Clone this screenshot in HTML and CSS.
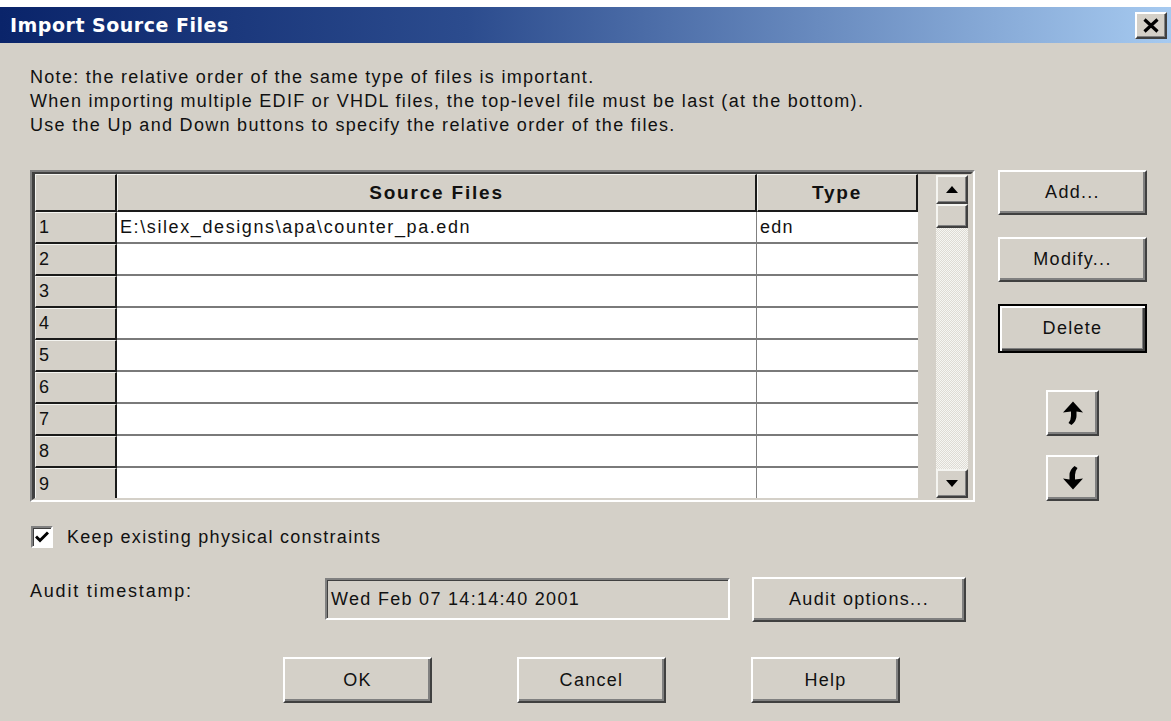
FILE: index.html
```html
<!DOCTYPE html>
<html lang="en">
<head>
<meta charset="utf-8">
<title>Import Source Files</title>
<link rel="stylesheet" href="styles.css">
</head>
<body>
<div class="screen-top"></div>
<div class="dialog">
  <div class="titlebar">
    <span class="title">Import Source Files</span>
    <button class="close" type="button" aria-label="Close">
      <svg width="18" height="15" viewBox="0 0 18 15"><path d="M2.5 1.5 L15.5 13.5 M15.5 1.5 L2.5 13.5" stroke="#000" stroke-width="3.2" fill="none"/></svg>
    </button>
  </div>

  <div class="content">
    <p class="note">Note: the relative order of the same type of files is important.<br>When importing multiple EDIF or VHDL files, the top-level file must be last (at the bottom).<br>Use the Up and Down buttons to specify the relative order of the files.</p>

    <div class="main">
      <div class="grid">
        <div class="grid-inner">
          <div class="table">
            <div class="row head">
              <div class="cell num"></div>
              <div class="cell src">Source Files</div>
              <div class="cell type">Type</div>
            </div>
            <div class="row"><div class="cell num">1</div><div class="cell src path">E:\silex_designs\apa\counter_pa.edn</div><div class="cell type">edn</div></div>
            <div class="row"><div class="cell num">2</div><div class="cell src"></div><div class="cell type"></div></div>
            <div class="row"><div class="cell num">3</div><div class="cell src"></div><div class="cell type"></div></div>
            <div class="row"><div class="cell num">4</div><div class="cell src"></div><div class="cell type"></div></div>
            <div class="row"><div class="cell num">5</div><div class="cell src"></div><div class="cell type"></div></div>
            <div class="row"><div class="cell num">6</div><div class="cell src"></div><div class="cell type"></div></div>
            <div class="row"><div class="cell num">7</div><div class="cell src"></div><div class="cell type"></div></div>
            <div class="row"><div class="cell num">8</div><div class="cell src"></div><div class="cell type"></div></div>
            <div class="row last"><div class="cell num">9</div><div class="cell src"></div><div class="cell type"></div></div>
          </div>
          <div class="scrollbar">
            <div class="sb-btn">
              <svg width="12" height="7" viewBox="0 0 12 7"><path d="M6 0 L12 7 L0 7 Z" fill="#000"/></svg>
            </div>
            <div class="sb-thumb"></div>
            <div class="sb-track"></div>
            <div class="sb-btn">
              <svg width="12" height="7" viewBox="0 0 12 7"><path d="M0 0 L12 0 L6 7 Z" fill="#000"/></svg>
            </div>
          </div>
        </div>
      </div>

      <div class="side">
        <button class="btn side-btn" type="button">Add...</button>
        <button class="btn side-btn" type="button">Modify...</button>
        <button class="btn side-btn default" type="button">Delete</button>
        <button class="btn arrow-btn up" type="button" aria-label="Move up">
          <svg width="20" height="24" viewBox="0 0 20 24"><path d="M10 0.5 L20 11.5 L13.5 10.5 L13.5 15 Q13.5 20 8.5 24 L5.5 22 Q8 19 8 15 L8 10.5 L0 11.5 Z" fill="#000"/></svg>
        </button>
        <button class="btn arrow-btn down" type="button" aria-label="Move down">
          <svg width="20" height="24" viewBox="0 0 20 24"><path d="M10 23.5 L0 12.5 L6.5 13.5 L6.5 9 Q6.5 4 11.5 0 L14.5 2 Q12 5 12 9 L12 13.5 L20 12.5 Z" fill="#000"/></svg>
        </button>
      </div>
    </div>

    <label class="check">
      <span class="box">
        <svg width="14" height="12" viewBox="0 0 14 12"><path d="M1 5.5 L5 9.5 L13 1.5" stroke="#000" stroke-width="3" fill="none"/></svg>
      </span>
      <span class="check-label">Keep existing physical constraints</span>
    </label>

    <div class="audit">
      <span class="audit-label">Audit timestamp:</span>
      <div class="field">Wed Feb 07 14:14:40 2001</div>
      <button class="btn audit-btn" type="button">Audit options...</button>
    </div>

    <div class="actions">
      <button class="btn action-btn" type="button">OK</button>
      <button class="btn action-btn" type="button">Cancel</button>
      <button class="btn action-btn" type="button">Help</button>
    </div>
  </div>
</div>
</body>
</html>
```

FILE: styles.css
```css
* { box-sizing: border-box; }

html, body {
  margin: 0;
  padding: 0;
  background: #ffffff;
  overflow: hidden;
}

body {
  font-family: "Liberation Sans", Arial, sans-serif;
  font-size: 18px;
  letter-spacing: 1.3px;
  color: #111;
}

.screen-top {
  height: 7px;
  background: #ffffff;
}

.dialog {
  width: 1171px;
  height: 714px;
  background: #d4d0c8;
  display: flex;
  flex-direction: column;
}

/* Caption bar */
.titlebar {
  height: 36px;
  display: flex;
  align-items: center;
  justify-content: space-between;
  padding: 0 4px 0 10px;
  background: linear-gradient(to right, #0a246a 0%, #2c4c8e 40%, #a6caf0 100%);
}

.title {
  color: #fff;
  font-family: "DejaVu Sans", "Liberation Sans", sans-serif;
  font-weight: bold;
  font-size: 19px;
  letter-spacing: 0.5px;
}

.close {
  width: 32px;
  height: 27px;
  padding: 0;
  display: flex;
  align-items: center;
  justify-content: center;
  background: #d4d0c8;
  border: 2px solid;
  border-color: #fff #404040 #404040 #fff;
  box-shadow: inset -1px -1px #808080;
}

/* Dialog contents */
.content {
  padding: 22px 0 0 30px;
  flex: 1;
}

.note {
  margin: 0;
  line-height: 24px;
}

.main {
  display: flex;
  margin-top: 33px;
}

/* Spreadsheet-style file list */
.grid {
  width: 945px;
  height: 332px;
  border-style: solid;
  border-width: 2px;
  border-color: #808080 #fff #fff #808080;
}

.grid-inner {
  height: 100%;
  display: flex;
  border-style: solid;
  border-width: 2px 2px 2px 3px;
  border-color: #404040 #d4d0c8 #d4d0c8 #404040;
  background: #d4d0c8;
  overflow: hidden;
}

.table {
  width: 883px;
  flex: none;
}

.row {
  display: flex;
  height: 32px;
}

.row.head {
  height: 38px;
}

.cell {
  height: 100%;
  white-space: nowrap;
  overflow: hidden;
  display: flex;
  align-items: center;
  padding-left: 3px;
}

.cell.path { letter-spacing: 1.6px; }

.cell.num {
  width: 82px;
  background: #d4d0c8;
  border-right: 2px solid #1a1a1a;
  border-bottom: 2px solid #1a1a1a;
  border-top: 1px solid #f4f4f0;
  border-left: 1px solid #f4f4f0;
}

.cell.src {
  width: 640px;
  background: #fff;
  border-right: 1px solid #808080;
  border-bottom: 2px solid #7a7a7a;
}

.cell.type {
  width: 161px;
  background: #fff;
  border-bottom: 2px solid #7a7a7a;
}

.row.last .cell { border-bottom: none; }

.head .cell {
  background: #d4d0c8;
  font-weight: bold;
  font-size: 19px;
  letter-spacing: 1.8px;
  justify-content: center;
  padding-left: 0;
  border-top: 1px solid #f4f4f0;
  border-left: 1px solid #f4f4f0;
  border-right: 2px solid #1a1a1a;
  border-bottom: 2px solid #1a1a1a;
}

/* Vertical scroll bar */
.scrollbar {
  width: 32px;
  margin-left: auto;
  margin-right: 3px;
  margin-top: 1px;
  display: flex;
  flex-direction: column;
}

.sb-btn,
.sb-thumb {
  flex: none;
  background: #d4d0c8;
  border: 2px solid;
  border-color: #f4f4f0 #404040 #404040 #f4f4f0;
  box-shadow: inset -1px -1px #808080;
  display: flex;
  align-items: center;
  justify-content: center;
}

.sb-btn { height: 29px; }
.sb-thumb { height: 24px; }

.sb-track {
  flex: 1;
  background: repeating-conic-gradient(#dedbd4 0 25%, #f6f6f2 0 50%) 0 0 / 2px 2px;
}

/* Push buttons */
.btn {
  font-family: "Liberation Sans", Arial, sans-serif;
  font-size: 18px;
  letter-spacing: 1.3px;
  color: #111;
  background: #d4d0c8;
  border: 2px solid;
  border-color: #fff #404040 #404040 #fff;
  box-shadow: inset -2px -2px #808080;
  padding: 0;
  display: flex;
  align-items: center;
  justify-content: center;
}

.side {
  margin-left: 23px;
  width: 149px;
  display: flex;
  flex-direction: column;
  align-items: center;
}

.side-btn {
  width: 149px;
  height: 45px;
}

.side-btn + .side-btn { margin-top: 22px; }

.side-btn.default {
  height: 49px;
  border: 2px solid #000;
  box-shadow: inset 2px 2px #fff, inset -2px -2px #404040, inset -3px -3px #808080;
}

.arrow-btn {
  width: 53px;
  height: 46px;
}

.arrow-btn.up { margin-top: 37px; }
.arrow-btn.down { margin-top: 19px; }

/* Checkbox */
.check {
  display: flex;
  align-items: center;
  margin-top: 24px;
  margin-left: 1px;
  height: 22px;
}

.box {
  width: 22px;
  height: 22px;
  background: #fff;
  border: 2px solid;
  border-color: #808080 #fff #fff #808080;
  box-shadow: inset 1px 1px #404040;
  display: flex;
  align-items: center;
  justify-content: center;
}

.check-label {
  margin-left: 14px;
}

/* Audit row */
.audit {
  display: flex;
  align-items: flex-start;
  margin-top: 29px;
}

.audit-label {
  width: 295px;
  padding-top: 4px;
  letter-spacing: 1.8px;
}

.field {
  width: 405px;
  height: 42px;
  border: 2px solid;
  border-color: #808080 #fff #fff #808080;
  box-shadow: inset 1px 1px #404040;
  padding-left: 4px;
  display: flex;
  align-items: center;
  margin-top: 1px;
}

.audit-btn {
  width: 214px;
  height: 45px;
  margin-left: 22px;
}

/* Dialog buttons */
.actions {
  display: flex;
  gap: 85px;
  margin-top: 35px;
  margin-left: 253px;
}

.action-btn {
  width: 149px;
  height: 46px;
}
```
